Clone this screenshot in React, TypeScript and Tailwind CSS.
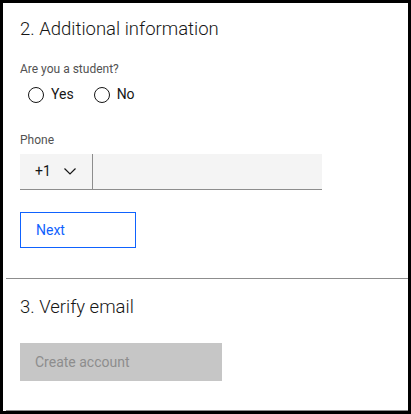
import React, { useState } from 'react';

const font = { fontFamily: 'Roboto, "Liberation Sans", sans-serif' };

const Radio = ({ label, checked, onClick }: { label: string; checked: boolean; onClick: () => void }) => (
  <button onClick={onClick} className="flex items-center gap-[7px] text-[14px] text-[#161616]">
    <span className="w-[16px] h-[16px] rounded-full border border-[#161616] flex items-center justify-center">
      {checked && <span className="w-[8px] h-[8px] rounded-full bg-[#161616]" />}
    </span>
    {label}
  </button>
);

export default function App() {
  const [student, setStudent] = useState<string | null>(null);

  return (
    <div className="w-[411px] h-[414px] bg-black p-[3px]" style={font}>
      <div className="w-full h-full bg-white flex flex-col">
        {/* Step 2 */}
        <div className="ml-[3px] pl-[14px] pt-[12px] h-[276px] border-b border-[#8d8d8d]">
          <h2 className="text-[18.5px] leading-[28px] font-light text-[#161616]">2. Additional information</h2>

          <p className="mt-[18px] text-[12px] leading-[16px] text-[#525252]">Are you a student?</p>
          <div className="mt-[7px] ml-[8px] flex gap-[20px]">
            <Radio label="Yes" checked={student === 'yes'} onClick={() => setStudent('yes')} />
            <Radio label="No" checked={student === 'no'} onClick={() => setStudent('no')} />
          </div>

          <p className="mt-[27px] text-[12px] leading-[16px] text-[#525252]">Phone</p>
          <div className="mt-[6px] w-[302px] h-[36px] bg-[#f4f4f4] border-b border-[#8d8d8d] flex">
            <div className="w-[73px] flex items-center border-r border-[#8d8d8d] pl-[15px] gap-[13px] text-[14px] text-[#161616]">
              +1
              <svg width="12" height="7" viewBox="0 0 12 7" fill="none" stroke="#161616" strokeWidth="1.2">
                <path d="M0.5 0.5 L6 6 L11.5 0.5" />
              </svg>
            </div>
            <input className="flex-1 bg-transparent outline-none px-3 text-[14px]" />
          </div>

          <button className="mt-[22px] w-[116px] h-[36px] border border-[#0f62fe] text-left pl-[15px] text-[14px] text-[#0f62fe]">
            Next
          </button>
        </div>

        {/* Step 3 */}
        <div className="ml-[3px] pl-[14px] pt-[14px] flex-1 border-b border-[#8d8d8d]">
          <h2 className="text-[18.5px] leading-[28px] font-light text-[#161616]">3. Verify email</h2>
          <button disabled className="mt-[22px] w-[202px] h-[38px] bg-[#c6c6c6] text-left pl-[15px] text-[14px] text-[#8d8d8d]">
            Create account
          </button>
        </div>
      </div>
    </div>
  );
}
